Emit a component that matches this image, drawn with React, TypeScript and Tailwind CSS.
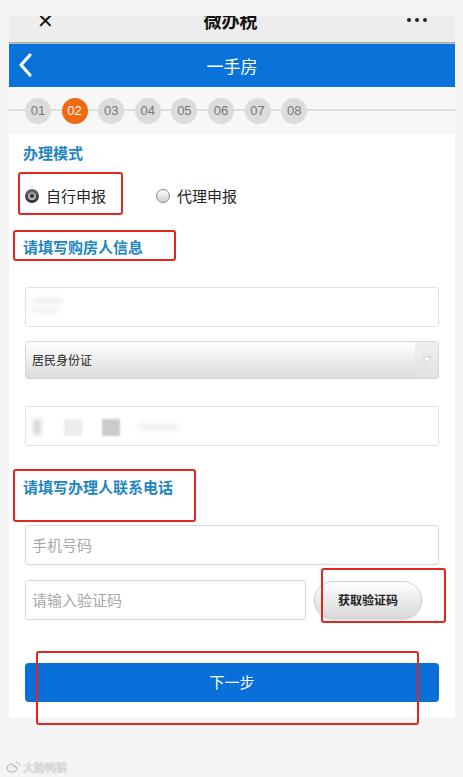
import React from 'react';

const steps = ['01', '02', '03', '04', '05', '06', '07', '08'];

const Radio = ({ checked }: { checked: boolean }) =>
  checked ? (
    <span className="block w-[14px] h-[14px] rounded-full bg-gradient-to-b from-[#6a6a6a] to-[#2e2e2e] flex items-center justify-center">
      <span className="w-[8px] h-[8px] rounded-full bg-gradient-to-b from-[#8c8c8c] to-[#d0d0d0] flex items-center justify-center">
        <span className="w-[4px] h-[4px] rounded-full bg-[#333]" />
      </span>
    </span>
  ) : (
    <span className="block w-[14px] h-[14px] rounded-full bg-gradient-to-b from-white to-[#d0d0d0] border border-[#8a8a8a]" />
  );

const App = () => {
  return (
    <div className="relative w-[463px] h-[777px] overflow-hidden bg-[#f4f4f4] pt-[16px] pl-[9px] pr-[8px] font-['Noto_Sans_CJK_SC','Noto_Sans',sans-serif]">
      {/* wechat top bar, cropped */}
      <div className="h-[26px] overflow-hidden bg-[#ededed]">
        <div className="h-[20px] -mt-[6px] flex items-center justify-between px-[28px] text-[#111]">
          <span className="text-[20px] leading-none font-light">✕</span>
          <span className="text-[18px] font-bold leading-none">微办税</span>
          <span className="flex gap-[4px]">
            <span className="w-[4px] h-[4px] rounded-full bg-[#222]" />
            <span className="w-[4px] h-[4px] rounded-full bg-[#222]" />
            <span className="w-[4px] h-[4px] rounded-full bg-[#222]" />
          </span>
        </div>
      </div>
      <div className="h-[2px] bg-gradient-to-b from-[#a4a4a4] to-[#c4c4c4]" />

      {/* blue header */}
      <div className="relative h-[43px] bg-[#0872d8] flex items-center justify-center">
        <svg className="absolute left-[7px] top-[8px]" width="18" height="26" viewBox="0 0 18 26">
          <path d="M14 3 L5 13 L14 23" fill="none" stroke="white" strokeWidth="3.2" strokeLinecap="round" strokeLinejoin="round" />
        </svg>
        <span className="text-white text-[17px]">一手房</span>
      </div>

      {/* steps */}
      <div className="relative h-[47px] bg-[#f7f7f7] flex items-center pl-[16px] gap-[10.6px]">
        <div className="absolute left-0 right-0 top-[22px] h-[2px] bg-[#dedede]" />
        {steps.map((s) => (
          <span
            key={s}
            className={
              s === '02'
                ? 'relative w-[26px] h-[26px] rounded-full bg-[#f26a10] text-white text-[13px] flex items-center justify-center font-["Liberation_Sans",sans-serif]'
                : 'relative w-[26px] h-[26px] rounded-full bg-[#dcdcdc] text-[#777] text-[13px] flex items-center justify-center font-["Liberation_Sans",sans-serif]'
            }
          >
            {s}
          </span>
        ))}
      </div>

      {/* form */}
      <div className="bg-white px-[16px] pt-[9px] pb-[16px]">
        <div className="-ml-[2px] h-[20px] leading-[20px] text-[15px] font-bold text-[#1f86c1]">办理模式</div>

        <div className="mt-[21px] h-[24px] flex items-center text-[15px] text-[#222]">
          <Radio checked />
          <span className="ml-[7px]">自行申报</span>
          <span className="ml-[50px]">
            <Radio checked={false} />
          </span>
          <span className="ml-[7px]">代理申报</span>
        </div>

        <div className="-ml-[2px] mt-[29px] h-[20px] leading-[20px] text-[15px] font-bold text-[#1f86c1]">请填写购房人信息</div>

        <div className="relative mt-[30px] h-[40px] rounded-[3px] border border-[#e2e2e2] overflow-hidden">
          <div className="absolute left-[6px] top-[10px] w-[30px] h-[6px] bg-[#eeeeee] blur-[2px]" />
          <div className="absolute left-[6px] top-[20px] w-[26px] h-[5px] bg-[#f0f0f0] blur-[2px]" />
        </div>

        <div className="mt-[14px] h-[38px] rounded-[3px] border border-[#d6d6d6] bg-gradient-to-b from-white to-[#dcdcdc] flex items-stretch">
          <span className="flex-1 flex items-center pl-[6px] text-[12px] text-[#222]">居民身份证</span>
          <span className="w-[23px] bg-gradient-to-b from-[#f0f0f0] to-[#e2e2e2] flex items-center justify-center">
            <svg width="10" height="8" viewBox="0 0 10 8">
              <path d="M1 1 L9 1 L5 7 Z" fill="#fbfbfb" stroke="#c8c8c8" strokeWidth="0.8" />
            </svg>
          </span>
        </div>

        <div className="relative mt-[27px] h-[40px] rounded-[3px] border border-[#e2e2e2] overflow-hidden">
          <div className="absolute left-[7px] top-[12px] w-[8px] h-[16px] bg-[#d6d6d6] blur-[2px]" />
          <div className="absolute left-[38px] top-[12px] w-[18px] h-[17px] bg-[#ececec] blur-[1px]" />
          <div className="absolute left-[76px] top-[12px] w-[18px] h-[17px] bg-[#cbcbcb] blur-[1px]" />
          <div className="absolute left-[112px] top-[16px] w-[40px] h-[8px] bg-[#f2f2f2] blur-[2px]" />
        </div>

        <div className="-ml-[2px] mt-[31px] h-[20px] leading-[20px] text-[15px] font-bold text-[#1f86c1]">请填写办理人联系电话</div>

        <div className="mt-[28px] h-[40px] rounded-[3px] border border-[#d8d8d8] flex items-center pl-[6px] text-[15px] text-[#a8a8a8]">
          手机号码
        </div>

        <div className="mt-[15px] h-[40px] flex items-center">
          <div className="w-[281px] h-[40px] rounded-[3px] border border-[#d8d8d8] flex items-center pl-[6px] text-[15px] text-[#a8a8a8]">
            请输入验证码
          </div>
          <button className="ml-[8px] w-[108px] h-[38px] rounded-full border border-[#d0d0d0] bg-gradient-to-b from-white to-[#d8d8d8] text-[12px] font-bold text-[#222] shadow-[0_1px_2px_rgba(0,0,0,0.15)]">
            获取验证码
          </button>
        </div>

        <button className="mt-[43px] w-full h-[39px] rounded-[4px] bg-[#0a70d9] text-white text-[15px]">下一步</button>
      </div>

      {/* watermark */}
      <div className="absolute left-[5px] top-[759px] flex items-center gap-[2px] text-[11px] text-[#e8e8e8] [text-shadow:0_0_1px_#888]">
        <svg width="16" height="13" viewBox="0 0 16 13">
          <path d="M6 3 C2 4 1 8 3 10 C6 12 11 11 12 8 C13 6 11 5 9 6 C10 4 8 3 6 3 Z" fill="#f2f2f2" stroke="#999" strokeWidth="0.8" />
          <path d="M11 1 C13 1 15 3 15 5" fill="none" stroke="#aaa" strokeWidth="0.8" />
        </svg>
        <span>大脸鸭猫</span>
      </div>

      {/* red annotation boxes */}
      <div className="absolute left-[18px] top-[172px] w-[105px] h-[43px] border-2 border-[#e3261f] rounded-[3px]" />
      <div className="absolute left-[13px] top-[230px] w-[163px] h-[31px] border-2 border-[#e3261f] rounded-[3px]" />
      <div className="absolute left-[13px] top-[469px] w-[183px] h-[53px] border-2 border-[#e3261f] rounded-[3px]" />
      <div className="absolute left-[321px] top-[568px] w-[125px] h-[55px] border-2 border-[#e3261f] rounded-[3px]" />
      <div className="absolute left-[36px] top-[651px] w-[383px] h-[74px] border-2 border-[#e3261f] rounded-[3px]" />
    </div>
  );
};

export default App;
